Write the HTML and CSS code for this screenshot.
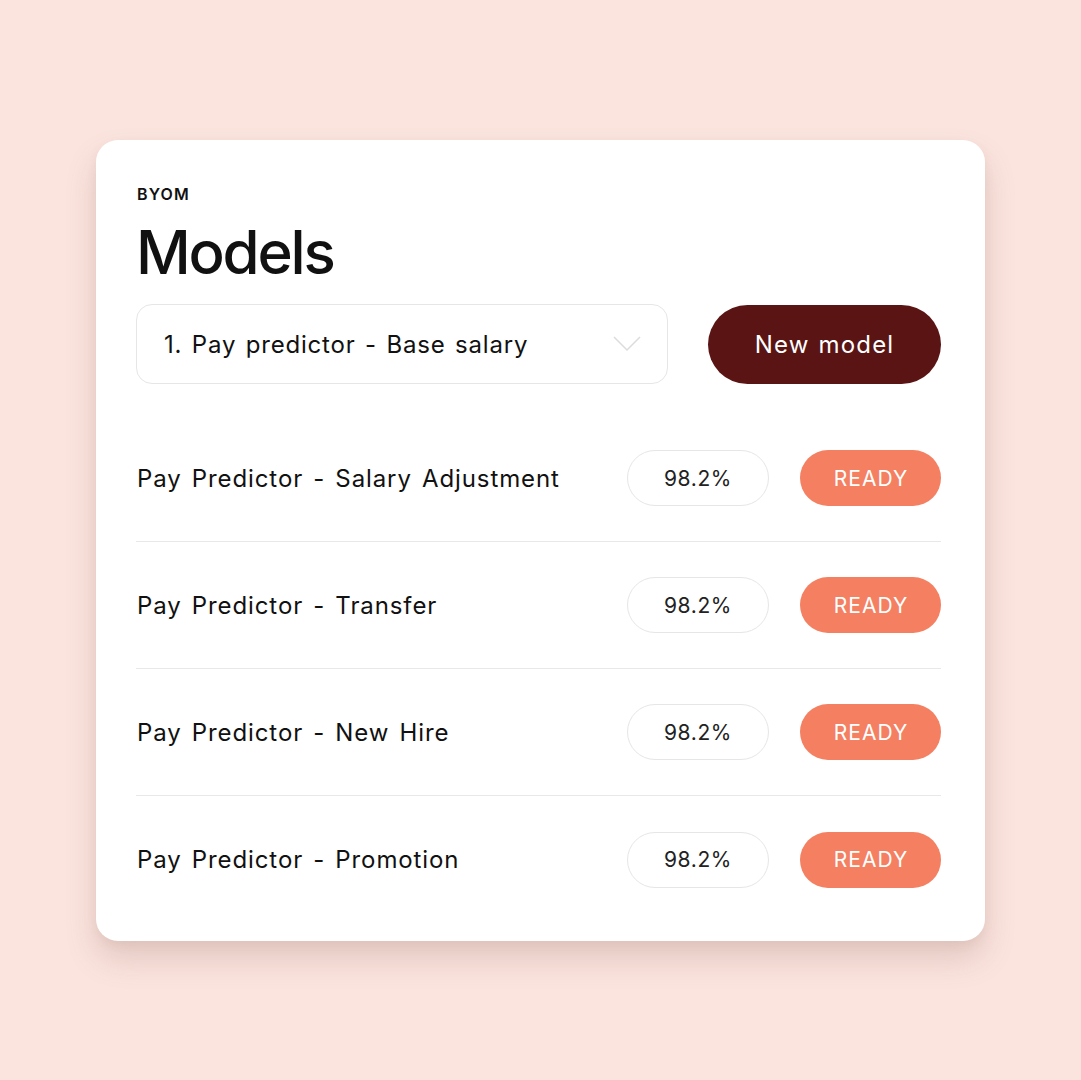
FILE: index.html
```html
<!DOCTYPE html>
<html lang="en">
<head>
<meta charset="utf-8">
<title>BYOM Models</title>
<link rel="stylesheet" href="styles.css">
</head>
<body>
<main class="stage">
  <section class="card">
    <div class="eyebrow">BYOM</div>
    <h1 class="title">Models</h1>
    <div class="toolbar">
      <div class="select">
        <span class="select-text">1. Pay predictor - Base salary</span>
        <svg class="chevron" width="28" height="16" viewBox="0 0 28 16" aria-hidden="true">
          <path d="M1 1 L14 14 L27 1" fill="none" stroke="#dcdcdc" stroke-width="1.5"/>
        </svg>
      </div>
      <button class="btn-primary">New model</button>
    </div>
    <ul class="list">
      <li class="row">
        <span class="row-name">Pay Predictor - Salary Adjustment</span>
        <span class="pill-score">98.2%</span>
        <span class="pill-status">READY</span>
      </li>
      <li class="row">
        <span class="row-name">Pay Predictor - Transfer</span>
        <span class="pill-score">98.2%</span>
        <span class="pill-status">READY</span>
      </li>
      <li class="row">
        <span class="row-name">Pay Predictor - New Hire</span>
        <span class="pill-score">98.2%</span>
        <span class="pill-status">READY</span>
      </li>
      <li class="row">
        <span class="row-name">Pay Predictor - Promotion</span>
        <span class="pill-score">98.2%</span>
        <span class="pill-status">READY</span>
      </li>
    </ul>
  </section>
</main>
</body>
</html>
```

FILE: styles.css
```css
* { box-sizing: border-box; }
html, body { margin: 0; padding: 0; }
body {
  background: #fbe4de;
  font-family: Inter, "DejaVu Sans", sans-serif;
  color: #111;
  width: 1081px;
  height: 1080px;
  overflow: hidden;
}
.stage {
  padding: 140px 0 0 96px;
}
.card {
  width: 889px;
  height: 801px;
  background: #fff;
  border-radius: 22px;
  padding: 44px 44px 0 40px;
  box-shadow: 0 18px 30px rgba(140, 100, 90, 0.22), 0 4px 10px rgba(140, 100, 90, 0.08);
}
.eyebrow {
  font-size: 16px;
  font-weight: 600;
  letter-spacing: 1.1px;
  line-height: 20px;
  margin-left: 1px;
}
.title {
  margin: 12px 0 0 0;
  font-size: 60px;
  font-weight: 500;
  letter-spacing: -2.2px;
  line-height: 72px;
}
.toolbar {
  display: flex;
  align-items: center;
  gap: 40px;
  margin-top: 16px;
}
.select {
  width: 532px;
  height: 80px;
  border: 1.5px solid #e6e6e6;
  border-radius: 16px;
  display: flex;
  align-items: center;
  justify-content: space-between;
  padding: 0 26px 0 27px;
}
.select-text {
  font-size: 24px;
  letter-spacing: 0.8px;
  word-spacing: 2px;
}
.chevron { display: block; }
.btn-primary {
  width: 233px;
  height: 79px;
  border: none;
  border-radius: 40px;
  background: #5a1414;
  color: #fff;
  font-family: inherit;
  font-size: 24px;
  letter-spacing: 1.2px;
  word-spacing: 1px;
  padding: 0;
}
.list {
  list-style: none;
  margin: 31px 0 0 0;
  padding: 0;
}
.row {
  display: flex;
  align-items: center;
  height: 127px;
  border-bottom: 1.5px solid #e8e8e8;
}
.row:last-child { border-bottom: none; }
.row-name {
  flex: 1;
  font-size: 24px;
  letter-spacing: 0.9px;
  word-spacing: 2.5px;
  margin-left: 1px;
}
.pill-score {
  width: 142px;
  height: 56px;
  border: 1.5px solid #e6e6e6;
  border-radius: 28px;
  display: flex;
  align-items: center;
  justify-content: center;
  font-size: 21px;
  letter-spacing: 0.6px;
  color: #222;
  margin-right: 31px;
}
.pill-status {
  width: 141px;
  height: 56px;
  border-radius: 28px;
  background: #f47f61;
  color: #fff;
  display: flex;
  align-items: center;
  justify-content: center;
  font-size: 21px;
  letter-spacing: 1px;
  padding-left: 1px;
}
```
